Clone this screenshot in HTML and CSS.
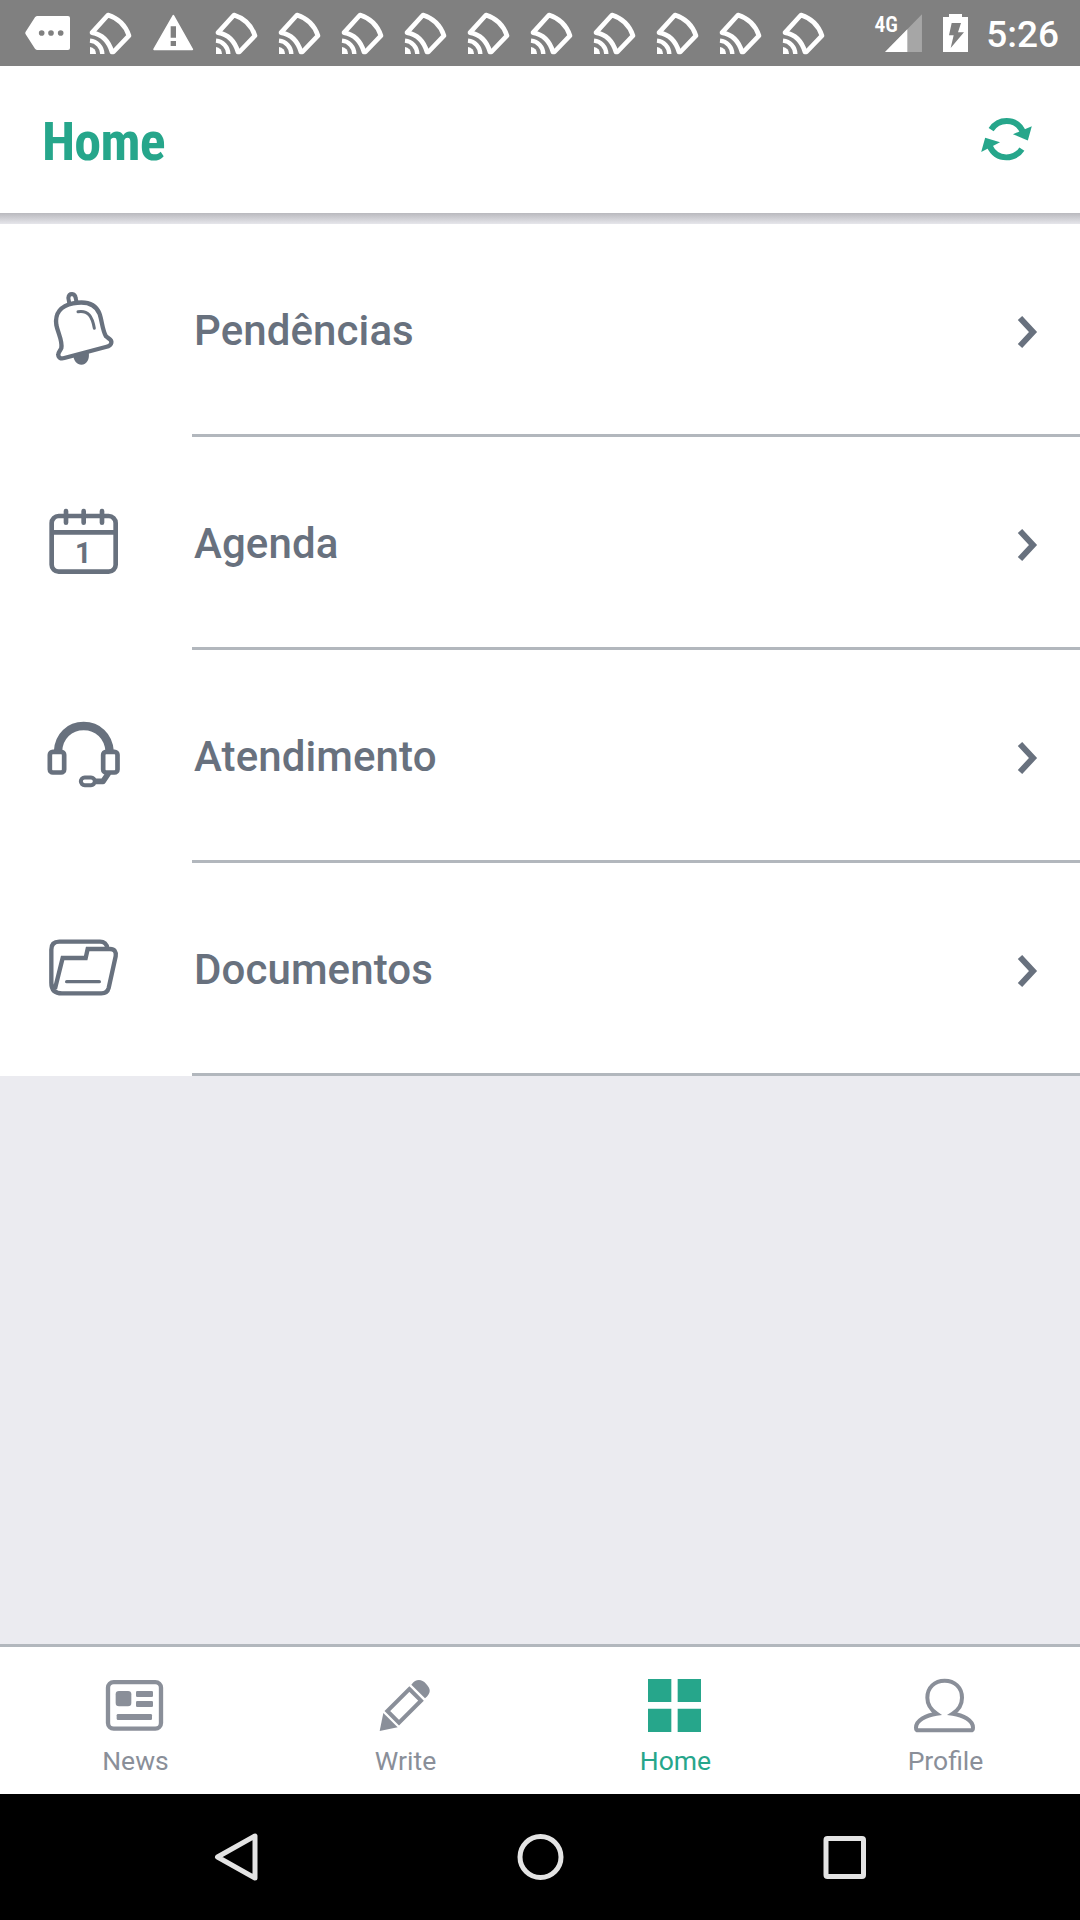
FILE: index.html
```html
<!DOCTYPE html>
<html lang="pt-BR">
<head>
  <meta charset="UTF-8">
  <meta name="viewport" content="width=device-width, initial-scale=1.0">
  <title>Home</title>
  <link rel="stylesheet" href="styles.css">
</head>
<body>

  <!-- shared icons -->
  <svg class="defs">
    <symbol id="cast" viewBox="0 0 189 198">
      <path d="M39 98 L87 45 Q134 60 150 107 L103 156 L99 156 Q84 106 39 98Z" fill="none" stroke="#fff" stroke-width="14" stroke-linejoin="round"/>
      <path d="M33 122 A41 41 0 0 1 70 162" fill="none" stroke="#fff" stroke-width="13"/>
      <path d="M33 141 A20 20 0 0 1 51 162 L33 162Z" fill="#fff"/>
    </symbol>
    <symbol id="chevron" viewBox="0 0 24 36">
      <path d="M4 4 L17 18 L4 32" fill="none" stroke="#68717e" stroke-width="6"/>
    </symbol>
  </svg>

  <div class="statusbar">
    <div class="notifications">
      <svg viewBox="48 0 189 198"><path d="M113 48 L204 48 Q210 48 210 54 L210 144 Q210 150 204 150 L113 150 Q108 150 105 146 L77 103 Q74 99 77 95 L105 52 Q108 48 113 48Z" fill="#fff"/><g fill="#808080"><circle cx="125" cy="99" r="8.500"/><circle cx="153" cy="99" r="8.500"/><circle cx="182" cy="99" r="8.500"/></g></svg>
      <svg><use href="#cast"/></svg>
      <svg viewBox="426 0 189 198"><path d="M520 47 L577 148 L462 148Z" fill="#fff" stroke="#fff" stroke-width="5" stroke-linejoin="round"/><path d="M512 79h16v34h-16zM512 123h16v15h-16z" fill="#808080"/></svg>
      <svg><use href="#cast"/></svg>
      <svg><use href="#cast"/></svg>
      <svg><use href="#cast"/></svg>
      <svg><use href="#cast"/></svg>
      <svg><use href="#cast"/></svg>
      <svg><use href="#cast"/></svg>
      <svg><use href="#cast"/></svg>
      <svg><use href="#cast"/></svg>
      <svg><use href="#cast"/></svg>
      <svg><use href="#cast"/></svg>
    </div>
    <div class="system">
      <span class="network">4G</span>
      <svg class="signal" viewBox="314 0 112 198"><path d="M314 156 L425 43 L425 156Z" fill="#a6a6a6"/><path d="M314 156 L381 88 L381 156Z" fill="#fff"/></svg>
      <svg class="battery" viewBox="489 0 75 198"><path d="M507 42h39v9h18v105h-75V51h18z" fill="#fff"/><path d="M515 69h28l-9 28h18l-40 47 9-38h-14z" fill="#808080"/></svg>
      <span class="clock">5:26</span>
    </div>
  </div>

  <header class="header">
    <h1>Home</h1>
    <svg class="refresh" viewBox="120 84 156 130" fill="#26a68b">
      <path d="M153 119 Q170 93 200 93 Q236 93 251 130" fill="none" stroke="#26a68b" stroke-width="18"/>
      <path d="M219 133 L276 109 L264 152Z"/>
      <path d="M246 178 Q230 203 199 203 Q164 203 148 168" fill="none" stroke="#26a68b" stroke-width="18"/>
      <path d="M180 157 L135 144 L123 187Z"/>
    </svg>
  </header>
  <div class="header-shadow"></div>

  <main>
    <ul class="menu">
      <li class="menu-item">
        <div class="menu-icon">
          <svg viewBox="36 51 252 252">
            <g fill="none" stroke="#68717e" stroke-linejoin="round" stroke-linecap="round">
              <path d="M118 101 L115 84 Q116 72 126 72 Q136 73 137 84 L140 98" stroke-width="12"/>
              <path d="M94 234 C98 212 84 190 79 165 C74 130 93 107 129 100 C166 93 196 101 208 130 C216 151 217 181 228 199 C236 207 246 208 244 218 C243 226 235 229 227 231 L103 264 C92 267 84 263 85 253 C85 245 91 242 94 234Z" stroke-width="13"/>
              <path d="M144 125 C175 120 187 140 193 175" stroke-width="9"/>
            </g>
            <path d="M130 258 L176 246 C180 268 170 284 154 284 C141 284 132 274 130 258Z" fill="#68717e"/>
          </svg>
        </div>
        <div class="menu-body">
          <span>Pendências</span>
          <svg class="chevron"><use href="#chevron"/></svg>
        </div>
      </li>
      <li class="menu-item">
        <div class="menu-icon">
          <svg viewBox="36 30 252 252">
            <g fill="none" stroke="#68717e" stroke-width="14">
              <rect x="65" y="78" width="192" height="167" rx="21"/>
              <path d="M65 127 H257"/>
              <path d="M108 63 V98 M161 63 V98 M216 63 V98" stroke-linecap="round"/>
            </g>
            <text class="day" x="160" y="218">1</text>
          </svg>
        </div>
        <div class="menu-body">
          <span>Agenda</span>
          <svg class="chevron"><use href="#chevron"/></svg>
        </div>
      </li>
      <li class="menu-item">
        <div class="menu-icon">
          <svg viewBox="36 39 252 252">
            <g fill="none" stroke="#68717e">
              <path d="M84 154 C86 108 119 78 161 78 C203 78 236 108 239 154" stroke-width="25"/>
              <rect x="59.500" y="155.500" width="43" height="62" rx="9" stroke-width="14"/>
              <rect x="219.500" y="155.500" width="43" height="62" rx="9" stroke-width="14"/>
              <rect x="152.500" y="232.500" width="42" height="23" rx="11.500" stroke-width="12"/>
              <path d="M194 244 L219 244 L236 219" stroke-width="17" stroke-linejoin="round"/>
            </g>
          </svg>
        </div>
        <div class="menu-body">
          <span>Atendimento</span>
          <svg class="chevron"><use href="#chevron"/></svg>
        </div>
      </li>
      <li class="menu-item">
        <div class="menu-icon">
          <svg viewBox="36 18 252 252">
            <g fill="none" stroke="#68717e" stroke-width="13">
              <path d="M232 86 C231 72 222 65 210 65 H88 Q64 65 64 89 V188 Q64 220 96 220 H214 Q232 220 236 204 L257 109 Q260 87 240 87 H173 L167 114 H98 L75 206"/>
              <path d="M110 185 H208" stroke-width="10" stroke-linecap="round"/>
            </g>
          </svg>
        </div>
        <div class="menu-body">
          <span>Documentos</span>
          <svg class="chevron"><use href="#chevron"/></svg>
        </div>
      </li>
    </ul>
  </main>

  <nav class="tabs">
    <a class="tab">
      <svg viewBox="75 135 180 180" fill="#8a8f99">
        <rect x="84" y="156.500" width="159" height="139.500" rx="17" fill="none" stroke="#8a8f99" stroke-width="13"/>
        <rect x="107" y="183" width="47" height="46" rx="10"/>
        <rect x="168" y="183" width="51" height="18" rx="4"/>
        <rect x="168" y="213" width="51" height="18" rx="4"/>
        <rect x="110" y="252" width="106" height="18" rx="4"/>
      </svg>
      <span>News</span>
    </a>
    <a class="tab">
      <svg viewBox="885 135 180 180" fill="#8a8f99">
        <path d="M910 249 L953 292 L899 303Z"/>
        <path d="M988 177 L1023 212 L957 278 L922 243Z" fill="none" stroke="#8a8f99" stroke-width="12"/>
        <path d="M994 164 C1008 145 1025 147 1038 161 C1053 177 1054 188 1035 205Z"/>
      </svg>
      <span>Write</span>
    </a>
    <a class="tab active">
      <svg viewBox="135 135 180 180" fill="#26a68b">
        <path d="M144 147h70v69h-70zM233 147h70v69h-70zM144 236h70v70h-70zM233 236h70v70h-70z"/>
      </svg>
      <span>Home</span>
    </a>
    <a class="tab">
      <svg viewBox="945 135 180 180">
        <path d="M1010 251 C993 239 982 222 982 203 C982 173 1004 152 1034 152 C1064 152 1086 173 1086 203 C1086 222 1075 240 1058 251 C1090 255 1119 272 1119 293 Q1119 301 1112 301 H955 Q948 301 948 293 C948 272 978 255 1010 251Z" fill="none" stroke="#8a8f99" stroke-width="12"/>
      </svg>
      <span>Profile</span>
    </a>
  </nav>

  <div class="navbar">
    <svg viewBox="0 0 60 60"><path d="M11.500 30 L49 9 V51Z"/></svg>
    <svg viewBox="0 0 60 60"><circle cx="30.500" cy="30" r="20.500"/></svg>
    <svg viewBox="0 0 60 60"><rect x="12" y="11.500" width="37.500" height="38" rx="1.500"/></svg>
  </div>

</body>
</html>
```
FILE: styles.css
```css
* {
  box-sizing: border-box;
}

body {
  margin: 0;
  height: 1920px;
  display: flex;
  flex-direction: column;
  font-family: Roboto, sans-serif;
  background: #ebebf0;
  overflow: hidden;
}

svg {
  display: block;
  flex-shrink: 0;
  overflow: visible;
}

.defs {
  position: absolute;
  width: 0;
  height: 0;
}

/* status bar */
.statusbar {
  height: 66px;
  padding: 0 21px 0 16px;
  display: flex;
  justify-content: space-between;
  background: #808080;
  color: #fff;
}

.notifications {
  display: flex;
}

.notifications svg {
  width: 63px;
  height: 66px;
}

.system {
  display: flex;
}

.network {
  margin-right: -13px;
  padding-top: 12px;
  font-size: 21.500px;
  line-height: 25px;
  font-weight: 600;
  font-stretch: 75%;
}

.signal {
  width: 37.3px;
  height: 66px;
}

.battery {
  width: 25px;
  height: 66px;
  margin-left: 21px;
}

.clock {
  margin-left: 18px;
  padding-top: 2px;
  font-size: 37px;
  line-height: 66px;
  font-weight: 500;
}

/* header */
.header {
  height: 147px;
  padding: 0 48px 0 42px;
  display: flex;
  align-items: center;
  justify-content: space-between;
  background: #fff;
}

.header h1 {
  margin: 0;
  padding-top: 4px;
  font-size: 54px;
  line-height: 64px;
  font-weight: 700;
  font-stretch: 75%;
  letter-spacing: -0.8px;
  color: #26a68b;
}

.refresh {
  width: 52px;
  height: 43px;
}

.header-shadow {
  height: 11px;
  background: linear-gradient(#b9b9be, #e6e6eb);
}

/* menu */
main {
  flex: 1;
}

.menu {
  margin: 0;
  padding: 0;
  list-style: none;
  background: #fff;
}

.menu-item {
  height: 213px;
  display: flex;
}

.menu-icon {
  width: 192px;
  padding: 63px 0 0 42px;
}

.menu-icon svg {
  width: 84px;
  height: 84px;
}

.menu-body {
  flex: 1;
  padding: 3px 40px 0 2px;
  display: flex;
  align-items: center;
  justify-content: space-between;
  border-bottom: 3px solid #b2b7bd;
  font-size: 42px;
  font-weight: 500;
  letter-spacing: 0.1px;
  color: #68717e;
}

.chevron {
  width: 24px;
  height: 36px;
  margin-top: 3px;
}

.day {
  font-size: 86px;
  font-weight: 700;
  text-anchor: middle;
  fill: #68717e;
}

/* bottom tabs */
.tabs {
  height: 150px;
  display: flex;
  background: #fff;
  border-top: 3px solid #b2b7bd;
}

.tab {
  flex: 1;
  padding-top: 28px;
  display: flex;
  flex-direction: column;
  align-items: center;
  font-size: 26.500px;
  line-height: 32px;
  color: #8a8f99;
}

.tab svg {
  width: 60px;
  height: 60px;
  margin-bottom: 10px;
}

.tab span {
  padding-left: 1px;
}

.tab.active {
  color: #26a68b;
}

/* android buttons */
.navbar {
  height: 126px;
  display: flex;
  align-items: center;
  justify-content: center;
  gap: 244px;
  background: #000;
}

.navbar svg {
  width: 60px;
  height: 60px;
  fill: none;
  stroke: #e4e4e4;
  stroke-width: 5;
  stroke-linejoin: round;
}
```
